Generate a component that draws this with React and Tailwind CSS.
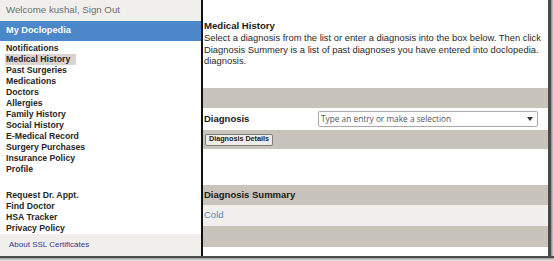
import React from "react";

const menu1 = [
  "Notifications",
  "Medical History",
  "Past Surgeries",
  "Medications",
  "Doctors",
  "Allergies",
  "Family History",
  "Social History",
  "E-Medical Record",
  "Surgery Purchases",
  "Insurance Policy",
  "Profile",
];
const menu2 = ["Request Dr. Appt.", "Find Doctor", "HSA Tracker", "Privacy Policy"];

export default function App() {
  return (
    <div className="w-[554px] h-[261px] bg-white overflow-hidden font-['Liberation_Sans',Arial,sans-serif] flex flex-col">
      <div className="flex h-[256px] shrink-0">
        {/* Sidebar */}
        <div className="w-[201px] shrink-0 flex flex-col bg-white">
          <div className="h-[21px] bg-[#f0efec] flex items-center pl-[6px] text-[9.7px] text-[#6e6e6e]">
            Welcome kushal, Sign Out
          </div>
          <div className="h-[20px] bg-[#4b87c9] flex items-center pl-[6px] text-[9.2px] font-bold text-white">
            My Doclopedia
          </div>
          <div className="pt-[1.5px] flex flex-col">
            {menu1.map((m) => (
              <div key={m} className="h-[11px] leading-[11px] text-[8.7px] font-bold text-[#262626]">
                {m === "Medical History" ? (
                  <div className="ml-[5px] w-[71px] pl-[1px] bg-[#d9d5ce]">{m}</div>
                ) : (
                  <div className="pl-[6px]">{m}</div>
                )}
              </div>
            ))}
          </div>
          <div className="h-[15px]" />
          <div className="flex flex-col">
            {menu2.map((m) => (
              <div key={m} className="h-[11px] leading-[11px] pl-[6px] text-[8.7px] font-bold text-[#262626]">
                {m}
              </div>
            ))}
          </div>
          <div className="mt-auto h-[22px] bg-[#f0efec] flex items-center pl-[9px] text-[8px] text-[#36358f]">
            About SSL Certificates
          </div>
        </div>
        {/* Divider */}
        <div className="w-[2px] shrink-0 bg-[#111]" />
        {/* Main */}
        <div className="w-[345px] shrink-0 overflow-hidden flex flex-col bg-white">
          <div className="pt-[20px] pl-[1px] text-[#1a1a1a]">
            <div className="h-[12px] leading-[12px] text-[9.6px] font-bold whitespace-nowrap">Medical History</div>
            <div className="text-[9.4px] leading-[11.7px] whitespace-nowrap text-[#2a2a2a]">
              <div>Select a diagnosis from the list or enter a diagnosis into the box below. Then click</div>
              <div>Diagnosis Summery is a list of past diagnoses you have entered into doclopedia.</div>
              <div>diagnosis.</div>
            </div>
          </div>
          <div className="h-[20px] mt-[21px] bg-[#c8c3bb]" />
          <div className="h-[22px] flex items-center pl-[1px]">
            <div className="w-[114px] text-[9.5px] font-bold text-[#1a1a1a]">Diagnosis</div>
            <div className="w-[220px] h-[16px] border border-[#a9a9a9] rounded-[2px] bg-white flex items-center justify-between pl-[2px] pr-[4px]">
              <span className="font-['Open_Sans',sans-serif] text-[8.3px] text-[#555] whitespace-nowrap">
                Type an entry or make a selection
              </span>
              <svg width="6" height="4" viewBox="0 0 6 4">
                <path d="M0 0 L6 0 L3 4 Z" fill="#333" />
              </svg>
            </div>
          </div>
          <div className="h-[19px] bg-[#c8c3bb] flex items-center pl-[2px]">
            <div className="h-[12px] w-[68px] border border-[#7d7d7d] rounded-[2px] bg-[#efede9] flex items-center justify-center text-[7.2px] font-bold text-[#222] whitespace-nowrap">
              Diagnosis Details
            </div>
          </div>
          <div className="h-[36px]" />
          <div className="h-[20px] bg-[#c8c3bb] flex items-center pl-[1px] text-[9.5px] font-bold text-[#1a1a1a]">
            Diagnosis Summary
          </div>
          <div className="h-[21px] bg-[#f2f0ec] flex items-center pl-[1px] text-[9.5px] text-[#6488bd]">
            Cold
          </div>
          <div className="h-[21px] bg-[#c8c3bb]" />
          <div className="flex-1 bg-white" />
        </div>
        {/* right shadow edge */}
        <div className="w-[3px] shrink-0 bg-[#4a4a4a]" />
        <div className="w-[3px] shrink-0 bg-gradient-to-r from-[#8a8a8a] to-[#e6e6e6]" />
      </div>
      <div className="h-[2px] shrink-0 bg-[#4a4a4a]" />
      <div className="flex-1 bg-gradient-to-b from-[#9a9a9a] to-[#f2f2f2]" />
    </div>
  );
}
